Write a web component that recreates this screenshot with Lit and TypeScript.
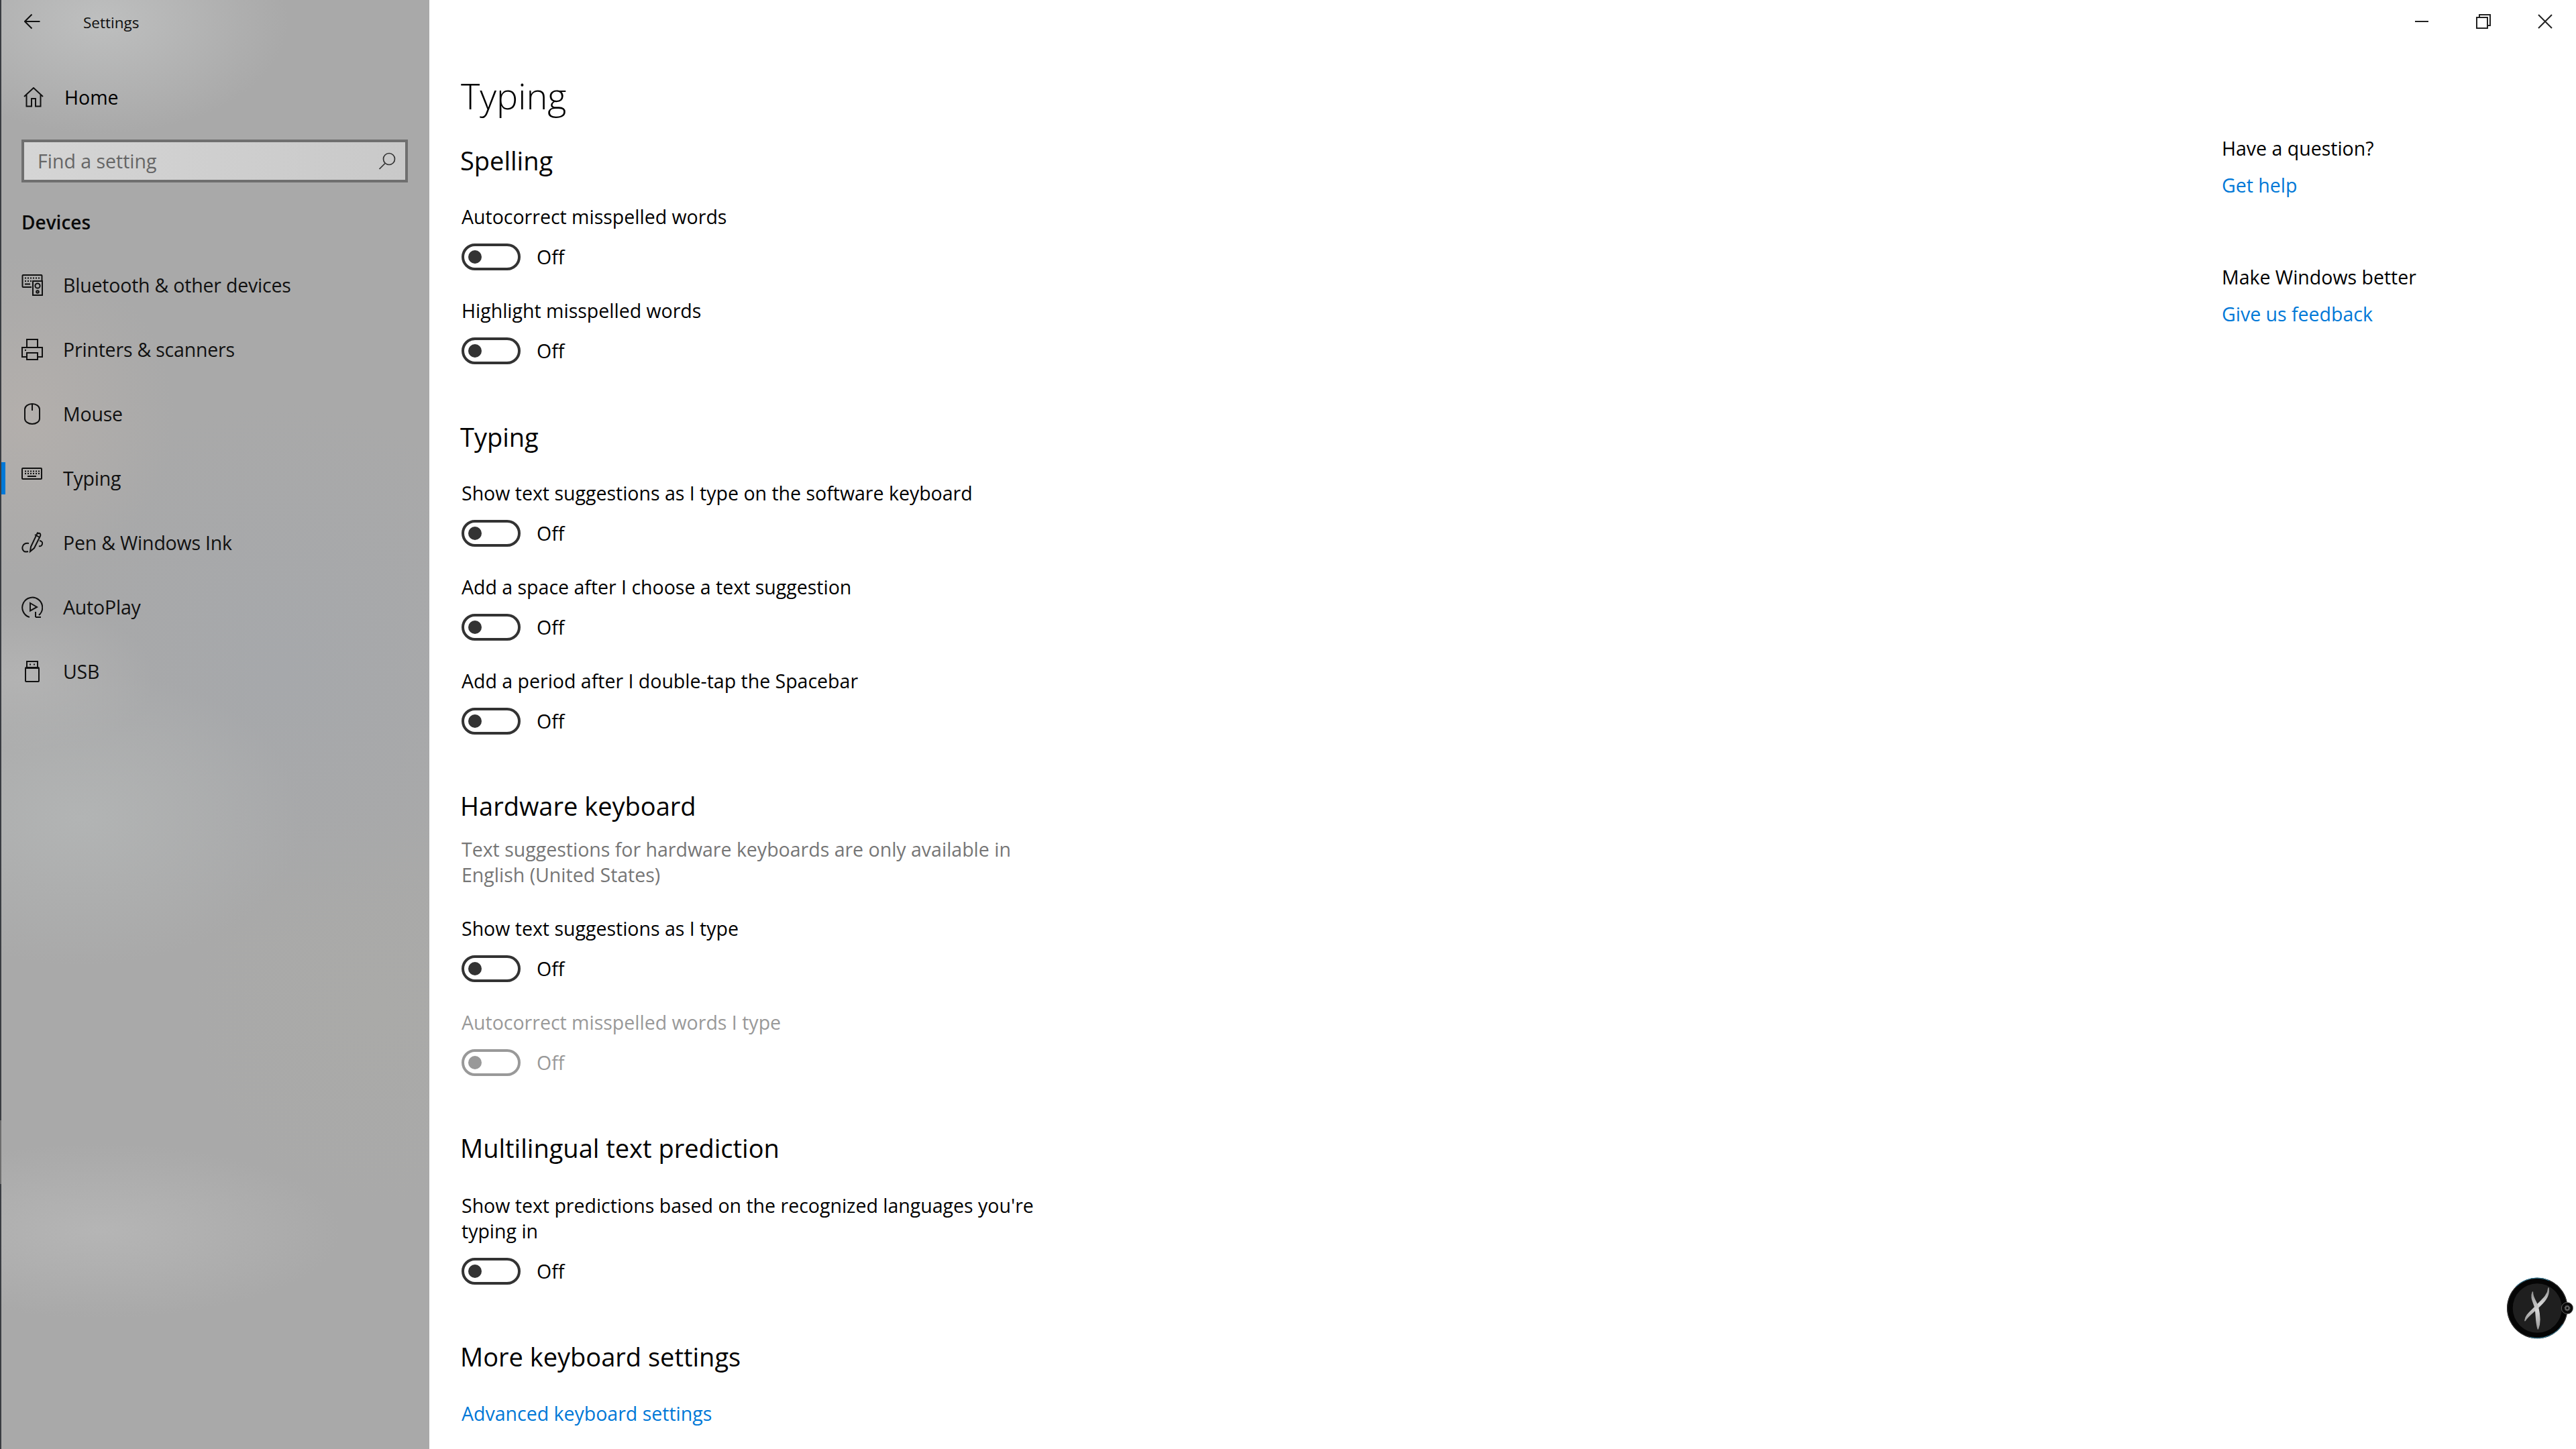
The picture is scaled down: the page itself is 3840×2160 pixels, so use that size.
import { LitElement, html, css, svg } from "lit";
import { customElement } from "lit/decorators.js";

const navItems: { label: string; icon: unknown; active?: boolean }[] = [
  {
    label: "Bluetooth & other devices",
    icon: svg`<path d="M15 19H2.500a1 1 0 0 1-1-1V2a1 1 0 0 1 1-1h27a1 1 0 0 1 1 1v7"/><rect x="17" y="10" width="14" height="21"/><circle cx="24" cy="17" r="3.600"/><circle cx="24" cy="26" r="1.800"/><path d="M5 5.500h2M9 5.500h2M13 5.500h2M17 5.500h2M21 5.500h2M25 5.500h2M5 10h2M9 10h2M13 10h2M5 14.500h8"/>`,
  },
  {
    label: "Printers & scanners",
    icon: svg`<path d="M8 13V1h16v12"/><path d="M8 27H1V13h30v14h-7"/><rect x="8" y="21" width="16" height="10"/><path d="M5 17h2"/>`,
  },
  {
    label: "Mouse",
    icon: svg`<path d="M5 9a11 8 0 0 1 22 0v14a11 8 0 0 1-22 0z"/><path d="M16 1v10"/>`,
  },
  {
    label: "Typing",
    active: true,
    icon: svg`<rect x="1" y="1" width="29" height="16" rx="1"/><path d="M5 5.500h2M9 5.500h2M13 5.500h2M17 5.500h2M21 5.500h2M25 5.500h2M5 9h2M9 9h2M13 9h2M17 9h2M21 9h2M25 9h2M9 13h13"/>`,
  },
  {
    label: "Pen & Windows Ink",
    icon: svg`<path d="M13 29l1-7L23 3q2-2 4-1t1 4L19 24z"/><path d="M20 4l7 4"/><path d="M23 1l3 1.500"/><path d="M27 13q5 1 4 5t-5 3"/><path d="M11 17q-7-1-9 4t2 8q3 1 6 0"/>`,
  },
  {
    label: "AutoPlay",
    icon: svg`<path d="M12 31A15 15 0 1 1 26 28"/><path d="M13 10l10 6-10 5.500z"/><path d="M21 31h8M21 31v-8"/>`,
  },
  {
    label: "USB",
    icon: svg`<rect x="8" y="1" width="16" height="10"/><rect x="6" y="10" width="20" height="21" rx="1"/><path d="M12 5.500h2M18 5.500h2"/>`,
  },
];

type Row = { label: unknown; disabled?: boolean };

const sections: { title: string; note?: unknown; rows: Row[] }[] = [
  { title: "Spelling", rows: [{ label: "Autocorrect misspelled words" }, { label: "Highlight misspelled words" }] },
  {
    title: "Typing",
    rows: [
      { label: "Show text suggestions as I type on the software keyboard" },
      { label: "Add a space after I choose a text suggestion" },
      { label: "Add a period after I double-tap the Spacebar" },
    ],
  },
  {
    title: "Hardware keyboard",
    note: html`Text suggestions for hardware keyboards are only available in<br />English (United States)`,
    rows: [{ label: "Show text suggestions as I type" }, { label: "Autocorrect misspelled words I type", disabled: true }],
  },
  {
    title: "Multilingual text prediction",
    rows: [{ label: html`Show text predictions based on the recognized languages you're<br />typing in` }],
  },
];

@customElement("app-root")
export class AppRoot extends LitElement {
  static styles = css`
    :host {
      display: block;
      width: 3840px;
      height: 2160px;
      overflow: hidden;
      position: relative;
      background: #fff;
      color: #000;
      font-family: "Open Sans", "Noto Sans", sans-serif;
      font-size: 28.5px;
      line-height: 38px;
    }
    * { box-sizing: border-box; }
    .app { display: flex; height: 2160px; }

    .sidebar {
      width: 640px;
      flex: none;
      height: 2160px;
      padding-left: 32px;
      position: relative;
      background:
        linear-gradient(#3a3d42 0 1670px, #6e6e6e 1670px 1765px, #3a3d42 1765px) 0 0 / 2px 100% no-repeat,
        radial-gradient(ellipse 280px 170px at 150px 30px, #bebfbf, transparent),
        radial-gradient(ellipse 220px 240px at 40px 620px, #b3afac, transparent),
        radial-gradient(ellipse 330px 220px at 120px 1220px, #b2b4b4, transparent),
        radial-gradient(ellipse 360px 130px at 150px 1835px, #b5b5b5, transparent),
        radial-gradient(ellipse 200px 110px at 30px 1010px, #b3b3b3, transparent),
        radial-gradient(ellipse 400px 400px at 420px 1000px, #a6a8ab, transparent),
        radial-gradient(ellipse 280px 300px at 560px 1500px, #aaaaa8, transparent),
        #a9a9a9;
    }
    .head { display: flex; align-items: center; height: 64px; }
    .head svg { margin-left: 4px; width: 24px; height: 24px; }
    .head span { margin-left: 64px; padding-top: 3px; font-size: 22.5px; color: #111; }
    .home { display: flex; align-items: center; height: 64px; margin-top: 49px; }
    .home svg { margin-left: 3px; width: 30px; height: 30px; }
    .home span { margin-left: 31px; }
    .search {
      display: flex;
      align-items: center;
      justify-content: space-between;
      width: 576px;
      height: 64px;
      margin-top: 31px;
      padding: 0 14px 0 20px;
      border: 4px solid #6f6f6f;
      background: linear-gradient(90deg, #d5d5d5, #c9c9c9);
      color: #666;
    }
    .search svg { width: 26px; height: 26px; stroke-width: 1.7; stroke: #333; }
    .group { height: 52px; margin-top: 33px; line-height: 52px; font-weight: 600; font-size: 28px; color: #0a0a0a; }
    nav { margin-top: 20px; }
    .item { display: flex; align-items: center; height: 96px; position: relative; color: #111; letter-spacing: -0.2px; }
    .item svg { width: 32px; height: 32px; flex: none; margin-right: 30px; }
    .item.active::before {
      content: "";
      position: absolute;
      left: -30px;
      top: 24px;
      width: 6px;
      height: 48px;
      background: #0078d7;
    }
    svg { fill: none; stroke: #111; stroke-width: 2; }

    main { flex: 1; display: flex; flex-direction: column; min-width: 0; }
    .bar { display: flex; justify-content: flex-end; height: 64px; }
    .ctl { width: 92px; height: 64px; display: flex; align-items: center; justify-content: center; }
    .ctl svg { width: 22px; height: 22px; stroke: #222; }
    .body { flex: 1; display: flex; justify-content: space-between; }
    .content { padding-left: 47px; }
    h1 { margin: 38px 0 0; font-size: 54px; line-height: 80px; font-weight: 300; }
    h2 { margin: 79px 0 37px -1px; font-size: 38px; line-height: 56px; font-weight: 400; }
    section.first h2 { margin-top: 29px; }
    section.second h2 { margin-top: 80px; }
    section.third h2 { margin-top: 78px; }
    section.fourth h2 { margin-bottom: 39px; }
    .note { margin: -19px 0 42px 1px; color: #767676; }
    .row { margin: 0 0 41px 1px; }
    .row:last-child { margin-bottom: 0; }
    .row.off { color: #999; }
    .sw { display: flex; align-items: center; gap: 24px; height: 40px; margin-top: 21px; }
    .track {
      width: 88px;
      height: 40px;
      border: 4px solid #333;
      border-radius: 20px;
      display: flex;
      align-items: center;
      padding-left: 6px;
    }
    .knob { width: 20px; height: 20px; border-radius: 50%; background: #333; }
    .off .track { border-color: #999; }
    .off .knob { background: #999; }
    .link { color: #0078d7; }
    .more { margin: 38px 0 0 1px; }
    h2.last { margin-bottom: 0; }
    aside { width: 528px; padding-top: 138px; flex: none; }
    aside .q { margin-bottom: 17px; }
    aside .a { margin-bottom: 99px; }

    .badge { position: absolute; left: 3700px; top: 1870px; width: 140px; height: 140px; }
    .badge svg { width: 140px; height: 140px; stroke: none; display: block; }
  `;

  render() {
    const cls = ["first", "second", "third", "fourth"];
    return html`
      <div class="app">
        <div class="sidebar">
          <div class="head">
            <svg viewBox="0 0 24 24"><path d="M23.500 12H1M11.500 1.500L1 12l10.500 10.500" /></svg>
            <span>Settings</span>
          </div>
          <div class="home">
            <svg viewBox="0 0 30 30"><path d="M1 14L15 1l14 13M4.500 11.500V28.500H12V17h6v11.500h7.500V11.500" /></svg>
            <span>Home</span>
          </div>
          <div class="search">
            <span>Find a setting</span>
            <svg viewBox="0 0 26 26"><circle cx="16" cy="10" r="8.500" /><path d="M10 16.500L1.500 25" /></svg>
          </div>
          <div class="group">Devices</div>
          <nav>
            ${navItems.map(
              (n) => html`<div class="item ${n.active ? "active" : ""}">
                <svg viewBox="0 0 32 32">${n.icon}</svg><span>${n.label}</span>
              </div>`
            )}
          </nav>
        </div>
        <main>
          <div class="bar">
            <div class="ctl"><svg viewBox="0 0 22 22"><path d="M1 11h20" /></svg></div>
            <div class="ctl"><svg viewBox="0 0 22 22"><rect x="1" y="5" width="16" height="16" /><path d="M5 5V1h16v16h-4" /></svg></div>
            <div class="ctl"><svg viewBox="0 0 22 22"><path d="M1 1l20 20M21 1L1 21" /></svg></div>
          </div>
          <div class="body">
            <div class="content">
              <h1>Typing</h1>
              ${sections.map(
                (s, i) => html`<section class=${cls[i]}>
                  <h2>${s.title}</h2>
                  ${s.note ? html`<div class="note">${s.note}</div>` : ""}
                  ${s.rows.map(
                    (r) => html`<div class="row ${r.disabled ? "off" : ""}">
                      <div>${r.label}</div>
                      <div class="sw">
                        <div class="track"><div class="knob"></div></div>
                        <span>Off</span>
                      </div>
                    </div>`
                  )}
                </section>`
              )}
              <h2 class="last">More keyboard settings</h2>
              <div class="link more">Advanced keyboard settings</div>
            </div>
            <aside>
              <div class="q">Have a question?</div>
              <div class="link a">Get help</div>
              <div class="q">Make Windows better</div>
              <div class="link a">Give us feedback</div>
            </aside>
          </div>
        </main>
      </div>
      <div class="badge">
        <svg viewBox="0 0 420 420">
          <defs>
            <linearGradient id="xg" x1="0" y1="0" x2="0" y2="1">
              <stop offset="0" stop-color="#8f8f8f" />
              <stop offset="0.5" stop-color="#d6d6d6" />
              <stop offset="1" stop-color="#9a9a9a" />
            </linearGradient>
          </defs>
          <circle cx="247" cy="240" r="136" fill="#050505" />
          <circle cx="247" cy="240" r="134" fill="none" stroke="#3a3a3a" stroke-width="3" />
          <path d="M150 145A134 134 0 0 1 300 117" fill="none" stroke="#2f7f9f" stroke-width="3" />
          <path d="M360 312A134 134 0 0 1 215 370" fill="none" stroke="#2f7f9f" stroke-width="3" />
          <circle cx="247" cy="240" r="110" fill="#1f1f1f" />
          <path fill="url(#xg)" stroke="url(#xg)" stroke-width="5" stroke-linejoin="round" d="M297 150C295 185 265 205 240 232C215 258 195 270 192 296C205 275 225 262 248 240C275 215 302 190 297 150Z" />
          <path fill="url(#xg)" stroke="url(#xg)" stroke-width="5" stroke-linejoin="round" d="M226 168C215 195 232 215 238 240C243 270 240 300 250 333C262 305 258 270 250 235C243 210 225 195 226 168Z" />
          <circle cx="381" cy="240" r="26" fill="#0a0a0a" stroke="#8a8a8a" stroke-width="2" />
          <circle cx="381" cy="240" r="8" fill="none" stroke="#666" stroke-width="6" />
          <circle cx="381" cy="240" r="12" fill="none" stroke="#666" stroke-width="3" stroke-dasharray="4 3.500" />
        </svg>
      </div>
    `;
  }
}
